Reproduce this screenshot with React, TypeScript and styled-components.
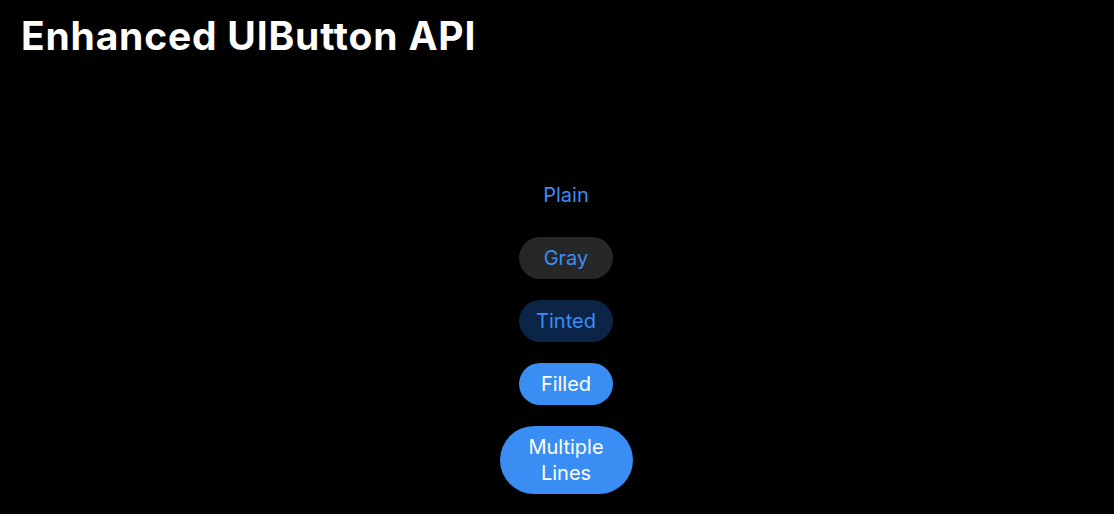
import styled, { createGlobalStyle } from "styled-components";

const GlobalStyle = createGlobalStyle`
html, body {
  margin: 0;
  padding: 0;
  background: #000;
}
body {
  font-family: Inter, "Noto Sans", sans-serif;
  -webkit-font-smoothing: antialiased;
}
`

const Slide = styled.div`
width: 1114px;
height: 514px;
background-color: #000;
display: flex;
flex-direction: column;
overflow: hidden;
`

const Title = styled.h1`
margin: 0;
padding: 12px 0 0 21px;
font-size: 39px;
line-height: 47px;
font-weight: 700;
letter-spacing: 0.8px;
color: #fff;
`

const ButtonStack = styled.div`
display: flex;
flex-direction: column;
align-items: center;
gap: 21px;
margin-top: 115px;
padding-left: 18px;
`

type Kind = "plain" | "gray" | "tinted" | "filled";

const backgrounds: Record<Kind, string> = {
    plain: "transparent",
    gray: "#272727",
    tinted: "#0b2448",
    filled: "#3a8df2",
}

const StyledButton = styled.button<{ $kind: Kind; $width: number }>`
box-sizing: border-box;
width: ${p => p.$width}px;
min-height: 42px;
padding: 8px 0;
border: none;
border-radius: 999px;
background-color: ${p => backgrounds[p.$kind]};
color: ${p => p.$kind === "filled" ? "#fff" : "#3a8df2"};
font-family: Inter, "Noto Sans", sans-serif;
font-size: 20px;
line-height: 26px;
font-weight: 400;
text-align: center;
cursor: pointer;
`

const buttons: { label: string[]; kind: Kind; width: number }[] = [
    { label: ["Plain"], kind: "plain", width: 94 },
    { label: ["Gray"], kind: "gray", width: 94 },
    { label: ["Tinted"], kind: "tinted", width: 94 },
    { label: ["Filled"], kind: "filled", width: 94 },
    { label: ["Multiple", "Lines"], kind: "filled", width: 133 },
]

export default function App() {
    return (
        <>
            <GlobalStyle />
            <Slide>
                <Title>Enhanced UIButton API</Title>
                <ButtonStack>
                    {buttons.map((b, i) => (
                        <StyledButton key={i} $kind={b.kind} $width={b.width}>
                            {b.label.map((line, j) => <div key={j}>{line}</div>)}
                        </StyledButton>
                    ))}
                </ButtonStack>
            </Slide>
        </>
    )
}
